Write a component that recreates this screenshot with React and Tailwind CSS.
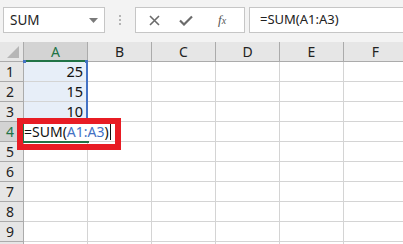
import React from "react";

const cols = ["A", "B", "C", "D", "E", "F"];
const rows = [1, 2, 3, 4, 5, 6, 7, 8, 9, 10];
const values = { 1: "25", 2: "15", 3: "10" };

function Toolbar() {
  return (
    <div className="h-[42px] bg-[#f3f3f3] flex items-start pt-[7px] shrink-0">
      <div className="ml-[3px] w-[102px] h-[26px] border border-[#c6c6c6] bg-white flex items-center justify-between pl-[6px] pr-[6px]">
        <span className="text-[13.5px] text-[#222]">SUM</span>
        <svg width="9" height="5" viewBox="0 0 9 5">
          <path d="M0 0h9L4.5 5z" fill="#7a7a7a" />
        </svg>
      </div>
      <div className="w-[30px] flex flex-col items-center gap-[2px] pt-[8px]">
        <div className="w-[2px] h-[2px] bg-[#b5b5b5]" />
        <div className="w-[2px] h-[2px] bg-[#b5b5b5]" />
        <div className="w-[2px] h-[2px] bg-[#b5b5b5]" />
      </div>
      <div className="w-[110px] h-[26px] border border-[#c6c6c6] bg-white flex items-center">
        <svg className="ml-[13px]" width="11" height="11" viewBox="0 0 11 11">
          <path d="M1 1l9 9M10 1l-9 9" stroke="#6b6b6b" strokeWidth="1.6" />
        </svg>
        <svg className="ml-[19px]" width="14" height="11" viewBox="0 0 14 11">
          <path d="M1 5.5l4 4L13 1.5" stroke="#6b6b6b" strokeWidth="2.2" fill="none" />
        </svg>
        <span className="ml-[25px] text-[13px] italic text-[#555]" style={{ fontFamily: '"Liberation Serif", serif' }}>
          f<span className="text-[10px]">x</span>
        </span>
      </div>
      <div className="ml-[4px] flex-1 h-[26px] border border-r-0 border-[#c6c6c6] bg-white flex items-center pl-[10px]">
        <span className="text-[13px] text-[#222]">=SUM(A1:A3)</span>
      </div>
    </div>
  );
}

function Grid() {
  return (
    <div className="relative">
      <div className="grid grid-cols-[24px_64px_64px_64px_64px_64px_64px] auto-rows-[20px]">
        <div className="bg-[#e6e6e6] border-r border-b border-[#ababab] relative">
          <svg className="absolute right-[4px] bottom-[3px]" width="12" height="12" viewBox="0 0 12 12">
            <path d="M12 0v12H0z" fill="#b6b6b6" />
          </svg>
        </div>
        {cols.map((c) => (
          <div
            key={c}
            className={
              c === "A"
                ? "bg-[#d3d3d3] border-r border-[#ababab] border-b-2 border-b-[#217346] flex items-center justify-center text-[14px] text-[#217346]"
                : "bg-[#e6e6e6] border-r border-b border-[#ababab] flex items-center justify-center text-[14px] text-[#222]"
            }
          >
            {c}
          </div>
        ))}
        {rows.map((r) => (
          <React.Fragment key={r}>
            <div
              className={
                r === 4
                  ? "bg-[#d3d3d3] border-r-2 border-r-[#217346] border-b border-[#ababab] flex items-center pl-[6px] text-[14px] text-[#217346]"
                  : "bg-[#e6e6e6] border-r border-b border-[#ababab] flex items-center pl-[6px] text-[14px] text-[#222]"
              }
            >
              {r < 10 ? r : null}
            </div>
            {cols.map((c) => (
              <div
                key={c}
                className={
                  c === "A" && values[r]
                    ? "bg-[#e7eef8] border-r border-b border-[#d4d4d4] flex items-end justify-end pr-[4px] text-[14.5px] leading-[19px] text-[#111]"
                    : "bg-white border-r border-b border-[#d4d4d4]"
                }
              >
                {c === "A" ? values[r] : null}
              </div>
            ))}
          </React.Fragment>
        ))}
      </div>

      {/* referenced range A1:A3 */}
      <div className="absolute left-[23px] top-[20px] w-[65px] h-[61px] border-r-2 border-[#4472c4]" />
      <div className="absolute left-[23px] top-[18px] w-[3px] h-[3px] bg-[#4472c4]" />
      <div className="absolute left-[85px] top-[18px] w-[3px] h-[3px] bg-[#4472c4]" />

      {/* cell editor A4 */}
      <div className="absolute left-[23px] top-[80px] w-[66px] h-[21px] border-b-2 border-[#217346]" />
      <div className="absolute left-[24px] top-[81px] h-[18px] bg-white flex items-end pr-[2px] text-[14px] leading-[18px] text-[#111]">
        <span>=SUM(</span>
        <span className="text-[#4472c4]">A1:A3</span>
        <span>)</span>
        <span className="ml-[1px] w-px h-[16px] bg-[#111] self-center" />
      </div>

      {/* highlight box */}
      <div className="absolute left-[17px] top-[76px] w-[104px] h-[32px] border-[6px] border-[#e81c24]" />
    </div>
  );
}

export default function App() {
  return (
    <div
      className="w-[403px] h-[244px] overflow-hidden bg-white flex flex-col"
      style={{ fontFamily: '"Segoe UI", "Noto Sans", sans-serif' }}
    >
      <Toolbar />
      <Grid />
    </div>
  );
}
